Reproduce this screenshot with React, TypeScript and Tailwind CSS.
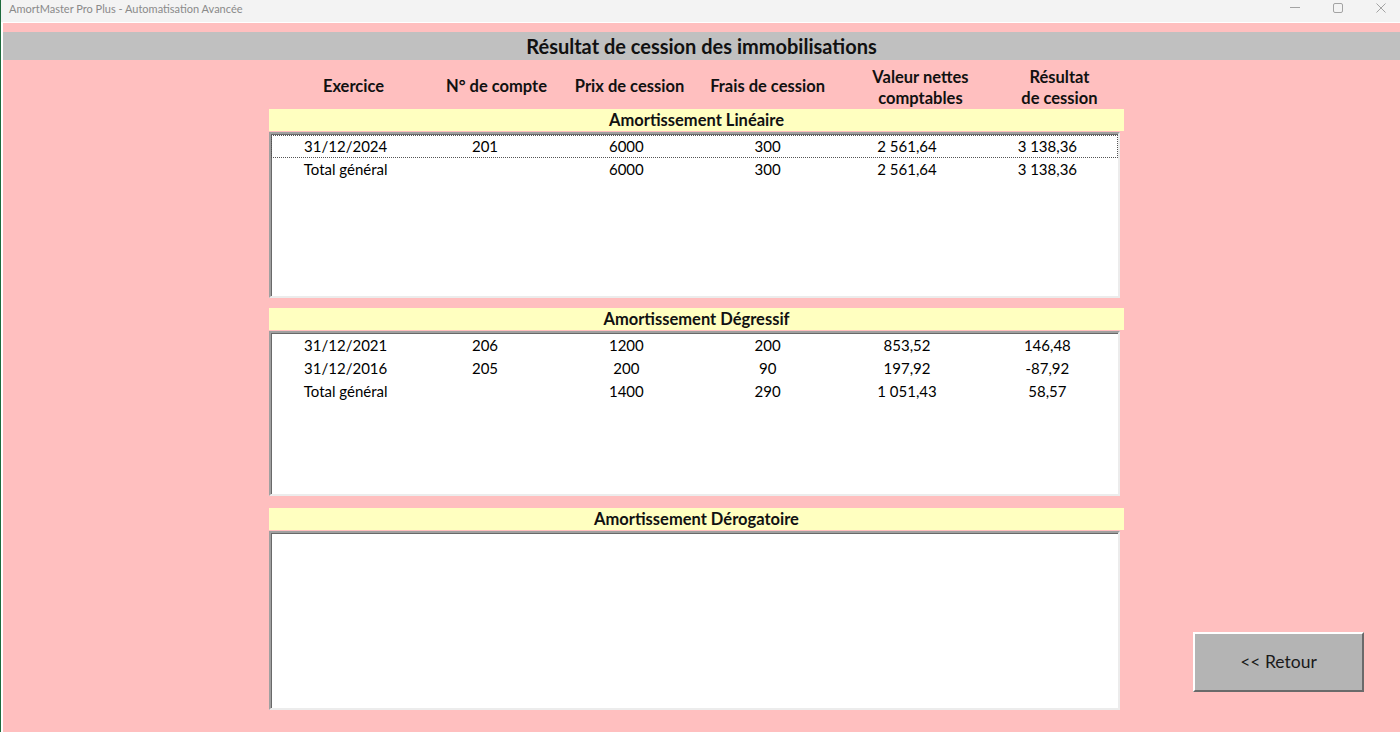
import React from "react";

const FONT = { fontFamily: "Lato, 'Open Sans', Arial, sans-serif" };

type Row = string[];

const sections: { title: string; rows: Row[]; height: string; focus?: boolean; gap: string }[] = [
  {
    title: "Amortissement Linéaire",
    rows: [
      ["31/12/2024", "201", "6000", "300", "2 561,64", "3 138,36"],
      ["Total général", "", "6000", "300", "2 561,64", "3 138,36"],
    ],
    height: "h-[166px] pt-px",
    focus: true,
    gap: "mt-0",
  },
  {
    title: "Amortissement Dégressif",
    rows: [
      ["31/12/2021", "206", "1200", "200", "853,52", "146,48"],
      ["31/12/2016", "205", "200", "90", "197,92", "-87,92"],
      ["Total général", "", "1400", "290", "1 051,43", "58,57"],
    ],
    height: "h-[165px] pt-px",
    gap: "mt-[10px]",
  },
  {
    title: "Amortissement Dérogatoire",
    rows: [],
    height: "h-[179px]",
    gap: "mt-[12px]",
  },
];

const cellWidths = ["w-[140px]", "w-[140px]", "w-[144px]", "w-[140px]", "w-[140px]", "w-[142px]"];

function ListRow({ cells, focus }: { cells: Row; focus?: boolean }) {
  return (
    <div
      className={
        "flex h-[23px] items-center pl-[5px] text-[15px] text-black " +
        (focus ? "outline-1 outline-dotted outline-[#555] -outline-offset-1" : "")
      }
    >
      {cells.map((c, i) => (
        <div key={i} className={cellWidths[i] + " text-center whitespace-nowrap"}>
          {c}
        </div>
      ))}
    </div>
  );
}

function Section({ title, rows, height, focus, gap }: (typeof sections)[number]) {
  return (
    <div className={gap}>
      <div className="flex h-[22px] w-[855px] items-center justify-center bg-[#ffffc0] text-[16.5px] font-bold text-[#111]">
        {title}
      </div>
      <div
        className={
          height +
          " mt-px w-[851px] border-2 border-t-[#a0a0a0] border-l-[#a0a0a0] border-r-[#ececec] border-b-[#ececec] bg-white shadow-[inset_1px_1px_0_#696969]"
        }
      >
        {rows.map((r, i) => (
          <ListRow key={i} cells={r} focus={focus && i === 0} />
        ))}
      </div>
    </div>
  );
}

function WindowControls() {
  return (
    <div className="flex items-center gap-[27px] pr-[11px] text-[#a3a3a3]">
      <svg width="16" height="16" viewBox="0 0 16 16">
        <path d="M3 7.5h10" stroke="currentColor" strokeWidth="1" />
      </svg>
      <svg width="16" height="16" viewBox="0 0 16 16">
        <rect x="3.5" y="3.5" width="9" height="9" rx="1.5" fill="none" stroke="currentColor" strokeWidth="1" />
      </svg>
      <svg width="16" height="16" viewBox="0 0 16 16">
        <path d="M3.5 3.5l9 9M12.5 3.5l-9 9" stroke="currentColor" strokeWidth="1" />
      </svg>
    </div>
  );
}

export default function App() {
  return (
    <div className="flex h-[732px] w-[1400px] flex-col overflow-hidden border-l border-[#1e6b3c]" style={FONT}>
      <div className="flex h-[22px] items-start justify-between bg-[#f3f3f3]">
        <span className="pl-[8px] pt-[2px] text-[11px] leading-[13px] text-[#8a8a8a]">
          AmortMaster Pro Plus - Automatisation Avancée
        </span>
        <WindowControls />
      </div>
      <div className="h-px bg-white" />
      <div className="flex-1 border-l-2 border-white bg-[#ffbfbf]">
        <div className="mt-[9px] flex h-[28px] items-center justify-center bg-[#c0c0c0] text-[20px] font-bold text-[#111]">
          Résultat de cession des immobilisations
        </div>
        <div className="flex">
          <div className="ml-[266px] flex w-[855px] flex-col">
            <div className="mt-[7px] flex h-[42px] pl-[15px] text-[16.5px] font-bold leading-[21px] text-[#111]">
              <div className="w-[140px] pt-[9px] text-center">Exercice</div>
              <div className="w-[148px] pt-[9px] text-center">N° de compte</div>
              <div className="w-[120px] pt-[9px] text-center whitespace-nowrap">Prix de cession</div>
              <div className="w-[158px] pt-[9px] text-center">Frais de cession</div>
              <div className="w-[150px] text-center">
                Valeur nettes
                <br />
                comptables
              </div>
              <div className="w-[130px] text-center">
                Résultat
                <br />
                de cession
              </div>
            </div>
            {sections.map((s) => (
              <Section key={s.title} {...s} />
            ))}
          </div>
          <div className="ml-[69px] flex flex-col justify-end pb-[18px]">
            <button className="flex h-[60px] w-[171px] items-center justify-center border-2 border-t-white border-l-white border-r-[#6a6a6a] border-b-[#6a6a6a] bg-[#b4b4b4] text-[17.5px] text-[#1a1a1a]">
              &lt;&lt; Retour
            </button>
          </div>
        </div>
      </div>
    </div>
  );
}
